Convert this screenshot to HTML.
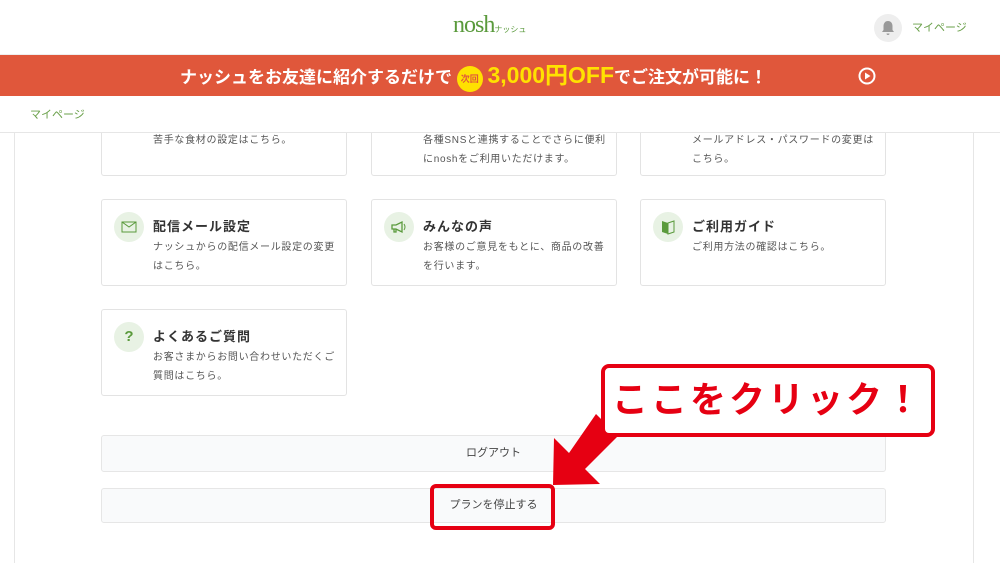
<!DOCTYPE html>
<html><head><meta charset="utf-8"><style>
*{box-sizing:border-box;margin:0;padding:0}
body{width:1000px;height:563px;overflow:hidden;background:#fff;font-family:"Liberation Sans","Noto Sans CJK JP",sans-serif;position:relative;color:#333}
.hdr{position:absolute;top:0;left:0;width:1000px;height:55px;background:#fff;border-bottom:1px solid #eee;z-index:2}
.logo{position:absolute;left:453px;top:12px;color:#5a9a3c;font-family:"Liberation Serif",serif;font-size:24px;letter-spacing:-1px}
.logo small{font-size:8px;font-family:"Noto Sans CJK JP",sans-serif;letter-spacing:0}
.bell{position:absolute;left:874px;top:14px;width:28px;height:28px;border-radius:50%;background:#eee}
.my{position:absolute;left:912px;top:19px;font-size:11px;color:#6aa04a}
.ban{position:absolute;top:55px;left:0;width:1000px;height:41px;background:#e0573b;color:#fff;font-weight:bold;z-index:2;overflow:hidden}
.ban .t{position:absolute;left:180px;top:0;height:41px;line-height:41px;font-size:17px;white-space:nowrap}
.ban .c{display:inline-block;width:26px;height:26px;border-radius:50%;background:#ffe100;color:#e0573b;font-size:9px;line-height:26px;text-align:center;vertical-align:middle}
.ban .y{color:#ffe100;font-size:23px}
.crumb{position:absolute;top:96px;left:0;width:1000px;height:37px;border-bottom:1px solid #e6e6e6;background:#fff;z-index:2}
.crumb span{position:absolute;left:30px;top:10px;font-size:11px;color:#6aa04a}
.wrap{position:absolute;top:133px;left:14px;width:960px;height:430px;border-left:1px solid #e6e6e6;border-right:1px solid #e6e6e6}
.card{position:absolute;width:246px;border:1px solid #e3e3e3;border-radius:3px;background:#fff}
.card h3{position:absolute;left:51px;top:16px;font-size:13px;color:#333;letter-spacing:1px}
.card p{position:absolute;left:51px;font-size:10px;line-height:19px;color:#555;width:186px;letter-spacing:0.7px}
.ic{position:absolute;left:12px;top:12px;width:30px;height:30px;border-radius:50%;background:#e8f2e4;color:#5a9a3c;text-align:center;line-height:30px;font-size:15px;font-weight:bold}
.btn{position:absolute;left:101px;width:785px;border:1px solid #e6e6e6;background:#f9fafb;border-radius:3px;text-align:center;font-size:11px;color:#444}
.call{position:absolute;left:601px;top:364px;width:334px;height:73px;border:4px solid #e60012;border-radius:8px;background:#fff;color:#e60012;font-size:36px;font-weight:bold;text-align:center;line-height:64px;letter-spacing:3px;z-index:3}
.hl{position:absolute;left:430px;top:484px;width:125px;height:46px;border:4px solid #e60012;border-radius:6px}
</style></head><body>
<div class="hdr"><div class="logo">nosh<small>ナッシュ</small></div><div class="bell"><svg width="28" height="28" viewBox="0 0 28 28"><path d="M14 7c-3 0-4.5 2.5-4.5 5v4l-1.5 2h12l-1.5-2v-4c0-2.5-1.5-5-4.5-5z M12.5 19.5a1.5 1.5 0 0 0 3 0z" fill="#999"/></svg></div><div class="my">マイページ</div></div>
<div class="ban"><div class="t">ナッシュをお友達に紹介するだけで <span class="c">次回</span> <span class="y">3,000円OFF</span>でご注文が可能に！</div>
<svg style="position:absolute;left:858px;top:12px" width="18" height="18"><circle cx="9" cy="9" r="7.5" fill="none" stroke="#fff" stroke-width="2"/><path d="M7 5.5v7l5.5-3.5z" fill="#fff"/></svg></div>
<div class="crumb"><span>マイページ</span></div>
<div class="wrap"></div>
<div class="card" style="left:101px;top:100px;height:76px"><p style="top:30px">苦手な食材の設定はこちら。</p></div>
<div class="card" style="left:371px;top:100px;height:76px"><p style="top:30px">各種SNSと連携することでさらに便利にnoshをご利用いただけます。</p></div>
<div class="card" style="left:640px;top:100px;height:76px"><p style="top:30px">メールアドレス・パスワードの変更はこちら。</p></div>
<div class="card" style="left:101px;top:199px;height:87px"><div class="ic"><svg width="16" height="12" style="margin-top:9px"><rect x="1" y="1" width="14" height="10" fill="none" stroke="#5a9a3c"/><path d="M1 1l7 5 7-5" fill="none" stroke="#5a9a3c"/></svg></div><h3>配信メール設定</h3><p style="top:38px">ナッシュからの配信メール設定の変更はこちら。</p></div>
<div class="card" style="left:371px;top:199px;height:87px"><div class="ic"><svg width="18" height="14" style="margin-top:8px"><path d="M2 5h4l6-3v10l-6-3H2z M4 9v3h2v-3" fill="none" stroke="#5a9a3c" stroke-width="1.3"/><path d="M14 4q2 3 0 6" fill="none" stroke="#5a9a3c"/></svg></div><h3>みんなの声</h3><p style="top:38px">お客様のご意見をもとに、商品の改善を行います。</p></div>
<div class="card" style="left:640px;top:199px;height:87px"><div class="ic"><svg width="14" height="16" style="margin-top:7px"><path d="M1 2l6 2v11l-6-2z" fill="#5a9a3c"/><path d="M7 4l6-2v11l-6 2z" fill="none" stroke="#5a9a3c"/></svg></div><h3>ご利用ガイド</h3><p style="top:38px">ご利用方法の確認はこちら。</p></div>
<div class="card" style="left:101px;top:309px;height:87px"><div class="ic">?</div><h3>よくあるご質問</h3><p style="top:38px">お客さまからお問い合わせいただくご質問はこちら。</p></div>
<div class="btn" style="top:435px;height:37px;line-height:35px">ログアウト</div>
<div class="btn" style="top:488px;height:35px;line-height:33px">プランを停止する</div>
<svg style="position:absolute;left:0;top:0;z-index:2" width="1000" height="563"><path d="M596 414L618 436L585 469L600 484L553 485L554 438L569 453Z" fill="#e60012"/></svg>
<div class="call">ここをクリック！</div>
<div class="hl"></div>
</body></html>
